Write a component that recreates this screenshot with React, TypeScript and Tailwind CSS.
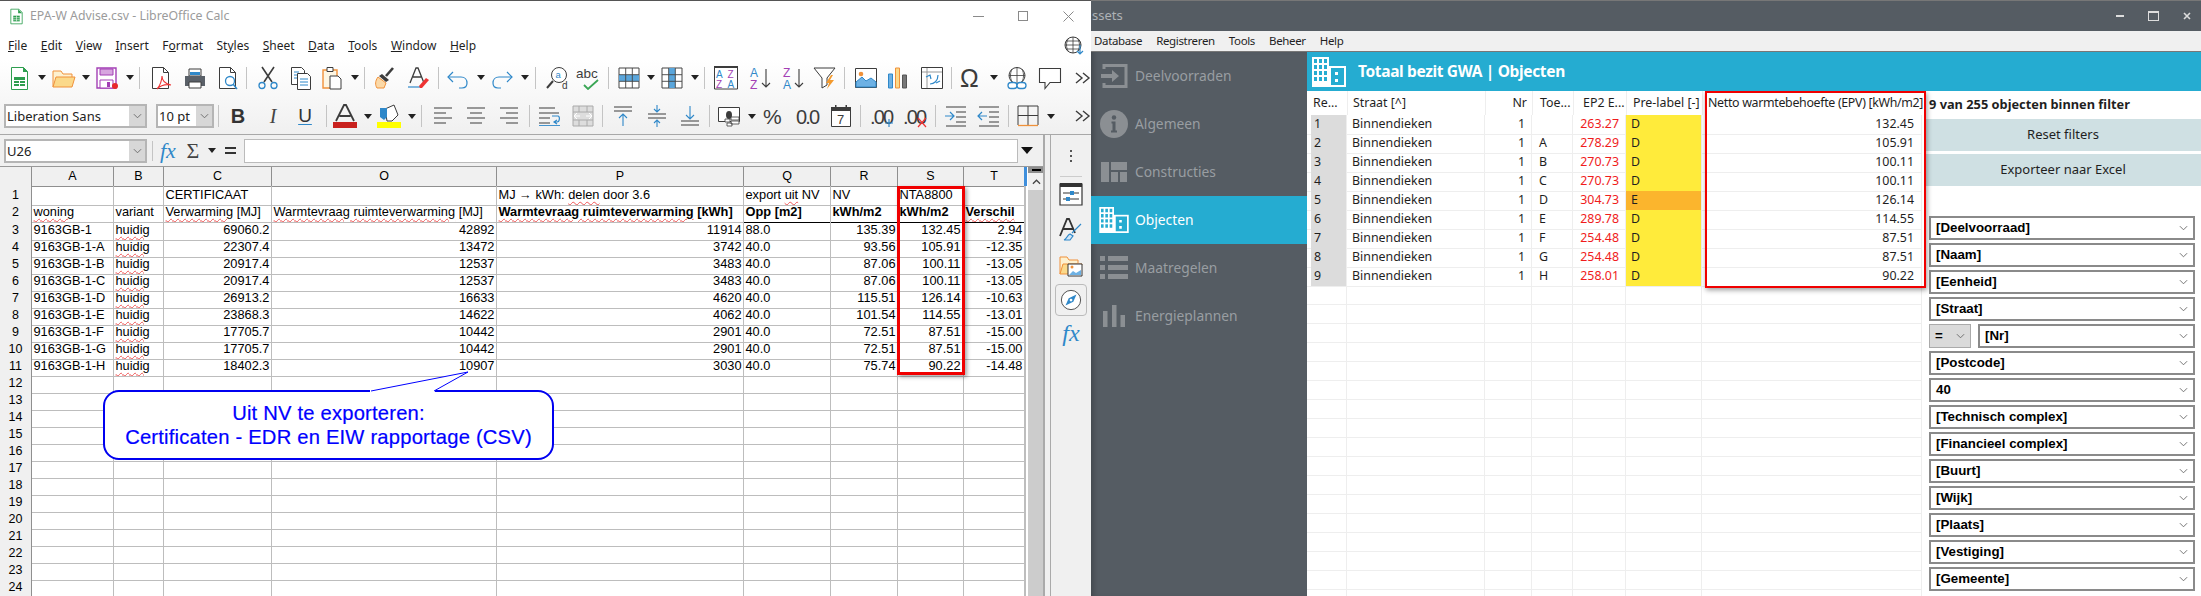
import React from "react";

type P = { c?: string };
const S = ({ c = "", children, w = 24 }: { c?: string; children: React.ReactNode; w?: number }) => (
  <svg viewBox={`0 0 ${w} 24`} width={w} height={24} fill="none" className={`flex-none ${c}`}>{children}</svg>
);
const DK = "#3c3c3c";
const BL = "#2f88c9";
const OR = "#f0913a";
const PU = "#a33fb5";

const DD = ({ c }: P) => (<svg viewBox="0 0 8 5" width={8} height={5} className={`flex-none ${c}`}><path d="M0 0h8L4 5z" fill="#222" /></svg>);
const Sep = ({ c }: P) => <div className={`w-px h-[22px] bg-[#c4c4c4] flex-none ${c}`} />;
const Chev2 = ({ c }: P) => (<S c={c}><path d="M6 7l6 5-6 5M13 7l6 5-6 5" stroke={DK} strokeWidth="1.4" /></S>);

const New = ({ c }: P) => (<S c={c}><path d="M4.5 1.5h12l4 4v18h-16z" fill="#fff" stroke="#2e9e4f" /><path d="M16 1l5 5h-5z" fill="#2e9e4f" /><path d="M7 11h11v9H7z" fill="#2e9e4f" /><path d="M7 14.5h11M7 17.5h11M12.5 14v6" stroke="#fff" /></S>);
const Open = ({ c }: P) => (<S c={c}><path d="M1 21V5h8l2 3h9v3" fill="#fdf1d0" stroke={OR} /><path d="M1 21l3-10h19l-3 10z" fill="#fbd98a" stroke={OR} /></S>);
const Save = ({ c }: P) => (<S c={c}><path d="M2 2h19v20H2z" fill="#fff" stroke={PU} strokeWidth="1.4" /><path d="M5 3h13v6H5z" fill="#d7a5df" stroke={PU} /><path d="M5 14h13v8H5z" fill="#fff" stroke={PU} /><path d="M12 16h3v5h-3z" fill={PU} /><circle cx="20" cy="20" r="3" fill="#e8282b" /></S>);
const Pdf = ({ c }: P) => (<S c={c}><path d="M3.5 1.5h11l5 5v16h-16z" fill="#fff" stroke={DK} /><path d="M14.5 1.5v5h5" stroke={DK} /><path d="M8 23c3-3 5-9 5-13 0 5 4 8 9 9-5-1-10 0-14 4z" stroke="#e33" strokeWidth="1.1" fill="#fff" /></S>);
const Print = ({ c }: P) => (<S c={c}><path d="M6 3h12v7H6z" fill="#fff" stroke={DK} /><path d="M7 6h10v3H7z" fill={BL} /><path d="M2 10h20v10H2z" fill="#5a6068" /><path d="M6 16h12v6H6z" fill="#fff" stroke={DK} /></S>);
const Preview = ({ c }: P) => (<S c={c}><path d="M3.5 1.5h11l5 5v16h-16z" fill="#fff" stroke={DK} /><path d="M14.5 1.5v5h5" stroke={DK} /><circle cx="14" cy="15" r="4.5" fill="#fff" stroke={BL} strokeWidth="1.3" /><path d="M17 18l4 5" stroke={BL} strokeWidth="1.5" /></S>);
const Cut = ({ c }: P) => (<S c={c}><path d="M6 1l10 15M18 1L8 16" stroke={DK} strokeWidth="1.6" /><circle cx="6" cy="19.5" r="3" stroke={BL} strokeWidth="1.3" /><circle cx="18" cy="19.5" r="3" stroke={BL} strokeWidth="1.3" /></S>);
const Copy = ({ c }: P) => (<S c={c}><path d="M2.5 1.5h10l3 3v14h-13z" fill="#fff" stroke={DK} /><path d="M8.5 7.5h10l3 3v13h-13z" fill="#fff" stroke={DK} /><path d="M11 13h8M11 16h8M11 19h8M5 6h5M5 9h3M5 12h3" stroke={BL} /></S>);
const Paste = ({ c }: P) => (<S c={c}><path d="M3 4h14v18H3z" fill="#fdf6e3" stroke={OR} strokeWidth="1.4" /><path d="M7 1.5h6v4H7z" fill="#fff" stroke={DK} /><path d="M10 10h8l3 3v10H10z" fill="#fff" stroke={DK} /></S>);
const Clone = ({ c }: P) => (<S c={c}><path d="M20 2l-7 8" stroke={DK} strokeWidth="2.6" /><path d="M9 8l7 6-3 2-7-6z" fill={DK} /><path d="M5 11l8 6-2 5H4c-2-3-2-7 1-11z" fill="#fbd9a8" stroke={OR} /></S>);
const Clear = ({ c }: P) => (<S c={c}><path d="M4 17L10 2h2l6 15M7 11h8" stroke={DK} strokeWidth="1.3" /><path d="M2 21h12" stroke={BL} strokeWidth="1.2" /><path d="M13 20l7-8 3 2-7 8h-2z" fill="#e33" /></S>);
const Undo = ({ c }: P) => (<S c={c}><path d="M7 6L2 11l5 5" stroke={BL} strokeWidth="1.2" /><path d="M2 11h13c4 0 6 3 6 6s-2 5-5 5h-3" stroke={BL} strokeWidth="1.2" /></S>);
const Redo = ({ c }: P) => (<S c={c}><path d="M17 6l5 5-5 5" stroke={BL} strokeWidth="1.2" /><path d="M22 11H9c-4 0-6 3-6 6s2 5 5 5h3" stroke={BL} strokeWidth="1.2" /></S>);
const Find = ({ c }: P) => (<S c={c}><circle cx="13" cy="9" r="7.5" fill="#fff" stroke={DK} /><path d="M7 15L1 22" stroke={DK} strokeWidth="2" /><text x="9.5" y="12" fontSize="9.5" fill={BL} fontFamily="Liberation Sans, sans-serif">a</text><text x="16" y="23" fontSize="10" fill={DK} fontFamily="Liberation Sans, sans-serif">d</text></S>);
const Spell = ({ c }: P) => (<S c={c}><text x="0" y="12" fontSize="13.5" fill={DK} fontFamily="Liberation Sans, sans-serif">abc</text><path d="M8 19l4 4 10-9" stroke="#3aa655" strokeWidth="1.8" /></S>);
const Grid = ({ col, c }: { col?: boolean } & P) => (<S c={c}><path d="M2 2h20v20H2z" fill="#fff" stroke="#444" /><path d={col ? "M8.7 2h6.6v20H8.7z" : "M2 8.7h20v6.6H2z"} fill="#5aa6dc" /><path d="M8.7 2v20M15.3 2v20M2 8.7h20M2 15.3h20" stroke="#444" strokeWidth=".9" /></S>);
const Sort = ({ c }: P) => (<S c={c} ><path d="M.5 1h23v22H.5z" fill="#fff" stroke={DK} /><path d="M0 1h24" stroke={DK} strokeWidth="2" /><g fontSize="10" fontFamily="Liberation Sans, sans-serif"><text x="2" y="12" fill={BL}>A</text><text x="2" y="21.5" fill={PU}>Z</text><text x="13.5" y="12" fill={PU}>Z</text><text x="13.5" y="21.5" fill={BL}>A</text></g></S>);
const AZ = ({ c, z }: { z?: boolean } & P) => (<S c={c}><g fontSize="12" fontFamily="Liberation Sans, sans-serif"><text x="2" y="11" fill={z ? PU : BL}>{z ? "Z" : "A"}</text><text x="2" y="22.5" fill={z ? BL : PU}>{z ? "A" : "Z"}</text></g><path d="M18 3v18M14 17l4 4 4-4" stroke={DK} strokeWidth="1.1" /></S>);
const Filter = ({ c }: P) => (<S c={c}><path d="M1 2h21l-8 10v7l-5 3V12z" fill="#fff" stroke={DK} /><path d="M18 9l-5 8h3l-2 6 7-9h-4l3-5z" fill="#f39a2e" /></S>);
const Img = ({ c }: P) => (<S c={c}><path d="M1.5 2.5h21v19h-21z" fill="#fff" stroke={DK} /><circle cx="7" cy="8" r="2.3" fill={OR} /><path d="M2 21v-5l6-5 4 4 5-3 5 4v5z" fill="#6db1e4" stroke={BL} /></S>);
const Chart = ({ c }: P) => (<S c={c}><path d="M2.5 8h4v14h-4z" fill="#6db1e4" stroke={BL} /><path d="M9.5 2h4v20h-4z" fill="#fbd98a" stroke={OR} /><path d="M16.5 9h4v13h-4z" fill="#777" stroke="#555" /></S>);
const Pivot = ({ c }: P) => (<S c={c}><path d="M1.5 1.5h21v21h-21z" fill="#fff" stroke={DK} /><path d="M2 6h20M7 2v20" stroke="#999" /><path d="M10 18c4 0 8-3 8-9M6 11l4-2 1 4M16 17l4-2" stroke={BL} strokeWidth="1.2" /></S>);
const Omega = ({ c }: P) => (<S c={c}><text x="1" y="21" fontSize="25" fill={DK} fontFamily="Liberation Sans, sans-serif">Ω</text></S>);
const Link = ({ c }: P) => (<S c={c}><circle cx="12" cy="9.5" r="8" fill="#fff" stroke={DK} /><path d="M4 9.5h16M12 1.5v16M7 3c-2 4-2 9 0 13M17 3c2 4 2 9 0 13" stroke={DK} strokeWidth=".8" /><rect x="3" y="16.5" width="9" height="6" rx="3" fill="#fff" stroke={BL} strokeWidth="1.3" /><rect x="12" y="16.5" width="9" height="6" rx="3" fill="#fff" stroke={BL} strokeWidth="1.3" /></S>);
const Comment = ({ c }: P) => (<S c={c}><path d="M1.5 2.5h21v14H12l-5 6v-6H1.5z" fill="#fff" stroke={DK} strokeWidth="1.1" /></S>);
const Globe = ({ c }: P) => (<S c={c}><circle cx="11" cy="11" r="8" stroke={DK} fill="#fff" /><path d="M3 11h16M11 3v16M6 5c-2 4-2 8 0 12M16 5c2 4 2 8 0 12M4 7h14M4 15h14" stroke={DK} strokeWidth=".8" /><path d="M18 11v9M15 17l3 3 3-3" stroke={BL} strokeWidth="1.2" /></S>);

const Lines = ({ c, a }: { a: "l" | "m" | "r" } & P) => {
  const d = a === "l" ? "M3 4h18M3 9h12M3 14h18M3 19h12" : a === "m" ? "M3 4h18M6 9h12M3 14h18M6 19h12" : "M3 4h18M9 9h12M3 14h18M9 19h12";
  return <S c={c}><path d={d} stroke={DK} strokeWidth="1.1" /></S>;
};
const FontA = ({ c }: P) => (<S c={c}><path d="M3 17L11 1h2l8 16M6.500 12h11" stroke={DK} strokeWidth="1.8" /><path d="M0 18h24v6H0z" fill="#c9211e" /></S>);
const Hl = ({ c }: P) => (<S c={c}><path d="M8 5l9-4 4 10-6 6H10z" fill="#fff" stroke={DK} /><path d="M3 4h7v9l-3 3-4-3z" fill={BL} /><path d="M0 18h24v6H0z" fill="#ffff00" /></S>);
const Wrap = ({ c }: P) => (<S c={c}><path d="M1 4h16M1 9h20M1 14h11M1 19h11" stroke={DK} strokeWidth="1.1" /><path d="M14 12h6c2 0 2 6-1 6h-2M19 16l-3 2 3 2" stroke={BL} strokeWidth="1.2" /><path d="M1 21.500h21" stroke={BL} strokeWidth=".9" /></S>);
const Merge = ({ c }: P) => (<S c={c}><path d="M2 2h20v20H2z" fill="#ddd" stroke="#aaa" /><path d="M2 8h20M2 16h20M8 2v6M16 2v6M8 16v6M16 16v6" stroke="#aaa" /><path d="M3 12h6M6 9l-3 3 3 3M21 12h-6M18 9l3 3-3 3" stroke="#fff" /></S>);
const VAlign = ({ c, t }: { t: "t" | "m" | "b" } & P) => (<S c={c}>
  {t === "t" && <><path d="M3 3h18M3 7h18" stroke={DK} /><path d="M12 22V10M8 14l4-4 4 4" stroke={BL} strokeWidth="1.1" /></>}
  {t === "m" && <><path d="M3 10h18M3 14h18" stroke={DK} /><path d="M12 1v7M9 5l3 3 3-3M12 23v-7M9 19l3-3 3 3" stroke={BL} strokeWidth="1.1" /></>}
  {t === "b" && <><path d="M12 2v13M8 11l4 4 4-4" stroke={BL} strokeWidth="1.1" /><path d="M3 17h18M3 21h18" stroke={DK} /></>}
</S>);
const Cur = ({ c }: P) => (<S c={c}><path d="M1.500 3.500h21v14h-21z" fill="#fff" stroke={DK} /><ellipse cx="12" cy="11" rx="3" ry="4" fill={DK} /><path d="M8 15h5v3H8zM14 13h8v3h-8zM14 17h8v3h-8zM10 19h5v3h-5z" fill="#fff" stroke={DK} strokeWidth=".8" /></S>);
const Pct = ({ c }: P) => (<S c={c}><text x="0" y="20" fontSize="21" fill={DK} fontFamily="Liberation Sans, sans-serif">%</text></S>);
const Num = ({ c }: P) => (<S c={c}><text x="0" y="20" fontSize="20" fill={DK} fontFamily="Liberation Sans, sans-serif" textLength="24">0.0</text></S>);
const DateI = ({ c }: P) => (<S c={c}><path d="M2.500 4.500h19v18h-19z" fill="#fff" stroke={DK} /><path d="M2 3h20v4H2zM6 1h1.500v3H6zM16.500 1H18v3h-1.500z" fill={DK} /><text x="8" y="20" fontSize="13" fill={DK} fontFamily="Liberation Sans, sans-serif">7</text></S>);
const Dec = ({ c, del }: { del?: boolean } & P) => (<S c={c}><text x="0" y="20" fontSize="20" fill={DK} fontFamily="Liberation Sans, sans-serif" textLength="24">.00</text>{del ? <path d="M15 14l8 9M23 14l-8 9" stroke="#e33" strokeWidth="1.2" /> : <path d="M15 19h8M19 15v8" stroke={BL} strokeWidth="1.2" />}</S>);
const Indent = ({ c, out }: { out?: boolean } & P) => (<S c={c}><path d="M2 3h20M12 8h10M12 13h10M12 18h10M2 22h20" stroke={DK} strokeWidth="1.1" /><path d={out ? "M10 12H1M5 8l-4 4 4 4" : "M1 12h9M6 8l4 4-4 4"} stroke={BL} strokeWidth="1.2" /></S>);
const Borders = ({ c }: P) => (<S c={c}><path d="M2 21V2h20v19M12 2v19M2 11.500h20" stroke={DK} /><path d="M2 21.500h20" stroke={OR} strokeWidth="1.3" /></S>);

const fontSheet = "font-[Liberation_Sans,Arial,sans-serif]";
const ui = "font-[Noto_Sans,Open_Sans,sans-serif]";
const serif = "font-[Liberation_Serif,serif]";

const Mnemonic = ({ t, u }: { t: string; u: number }) => (
  <span>{t.slice(0, u)}<span className="underline">{t[u]}</span>{t.slice(u + 1)}</span>
);

const Combo = ({ text, c }: { text: string; c: string }) => (
  <div className={`h-[24px] flex-none border-2 border-[#b5b5b5] bg-white flex ${c}`}>
    <div className={`flex-1 pl-[1px] text-[13px] leading-[20px] text-[#222] ${ui}`}>{text}</div>
    <div className="w-[16px] bg-[#d7d7d7] flex items-center justify-center">
      <svg viewBox="0 0 10 6" width={9} height={6}><path d="M1 1l4 4 4-4" stroke="#666" fill="none" /></svg>
    </div>
  </div>
);

const Wavy = ({ children }: { children: React.ReactNode }) => (
  <span className="underline decoration-wavy decoration-[#ee5555] decoration-1 [text-underline-offset:2px]">{children}</span>
);

const colHeads = ["A", "B", "C", "O", "P", "Q", "R", "S", "T"];
const rows: string[][] = [
  ["9163GB-1", "69060.2", "42892", "11914", "88.0", "135.39", "132.45", "2.94"],
  ["9163GB-1-A", "22307.4", "13472", "3742", "40.0", "93.56", "105.91", "-12.35"],
  ["9163GB-1-B", "20917.4", "12537", "3483", "40.0", "87.06", "100.11", "-13.05"],
  ["9163GB-1-C", "20917.4", "12537", "3483", "40.0", "87.06", "100.11", "-13.05"],
  ["9163GB-1-D", "26913.2", "16633", "4620", "40.0", "115.51", "126.14", "-10.63"],
  ["9163GB-1-E", "23868.3", "14622", "4062", "40.0", "101.54", "114.55", "-13.01"],
  ["9163GB-1-F", "17705.7", "10442", "2901", "40.0", "72.51", "87.51", "-15.00"],
  ["9163GB-1-G", "17705.7", "10442", "2901", "40.0", "72.51", "87.51", "-15.00"],
  ["9163GB-1-H", "18402.3", "10907", "3030", "40.0", "75.74", "90.22", "-14.48"],
];
const gridCols = "grid grid-cols-[32px_82px_50px_108px_225px_247px_87px_67px_66px_61px]";
const cell = "border-r border-b border-[#bdbdbd] h-full px-[1.5px] whitespace-nowrap overflow-hidden leading-[18px]";
const hdr = "border-r border-b border-[#8f8f8f] bg-[#f0f0f0] flex items-center justify-center text-[12.5px]";
const R = "text-right";

const Sheet = () => (
  <div className={`relative flex-1 overflow-hidden flex bg-white text-[12.8px] text-black ${fontSheet}`}>
    <div className="w-[1025px] flex-none">
      <div className={`${gridCols} h-[19px]`}>
        <div className={hdr} />
        {colHeads.map((h) => <div key={h} className={hdr}>{h}</div>)}
      </div>
      <div className={`${gridCols} h-[17px]`}>
        <div className={hdr}>1</div>
        <div className={cell} /><div className={cell} />
        <div className={cell}>CERTIFICAAT</div>
        <div className={cell} />
        <div className={cell}>MJ → kWh: <Wavy>delen</Wavy> door 3.6</div>
        <div className={cell}>export <Wavy>uit</Wavy> NV</div>
        <div className={cell}>NV</div>
        <div className={cell}>NTA8800</div>
        <div className={cell} />
      </div>
      <div className={`${gridCols} h-[18px]`}>
        <div className={hdr}>2</div>
        <div className={cell}><Wavy>woning</Wavy></div>
        <div className={cell}>variant</div>
        <div className={cell}><Wavy>Verwarming</Wavy> [MJ]</div>
        <div className={cell}><Wavy>Warmtevraag ruimteverwarming</Wavy> [MJ]</div>
        <div className={`${cell} font-bold`}><Wavy>Warmtevraag ruimteverwarming</Wavy> [kWh]</div>
        <div className={`${cell} font-bold !border-b-black`}>Opp [m2]</div>
        <div className={`${cell} font-bold !border-b-black`}>kWh/m2</div>
        <div className={`${cell} font-bold !border-b-black`}>kWh/m2</div>
        <div className={`${cell} font-bold !border-b-black`}><Wavy>Verschil</Wavy></div>
      </div>
      {rows.map((r, i) => (
        <div key={i} className={`${gridCols} h-[17px]`}>
          <div className={hdr}>{i + 3}</div>
          <div className={cell}>{r[0]}</div>
          <div className={cell}><Wavy>huidig</Wavy></div>
          <div className={`${cell} ${R}`}>{r[1]}</div>
          <div className={`${cell} ${R}`}>{r[2]}</div>
          <div className={`${cell} ${R}`}>{r[3]}</div>
          <div className={cell}>{r[4]}</div>
          <div className={`${cell} ${R}`}>{r[5]}</div>
          <div className={`${cell} ${R} pr-[2.5px]`}>{r[6]}</div>
          <div className={`${cell} ${R}`}>{r[7]}</div>
        </div>
      ))}
      {Array.from({ length: 13 }, (_, i) => (
        <div key={i} className={`${gridCols} h-[17px]`}>
          <div className={hdr}>{i + 12}</div>
          {colHeads.map((h) => <div key={h} className={cell} />)}
        </div>
      ))}
    </div>
    <div className="w-[3px] flex-none bg-white border-l border-[#bdbdbd]">
      <div className="h-[19px] bg-[#3f8fdc] -ml-[2px] w-[3px]" />
    </div>
    <div className="w-[16px] flex-none flex flex-col bg-[#ccc]">
      <div className="h-[6px] bg-[#8e8e8e] flex items-center justify-center"><div className="w-[9px] h-[2px] bg-black" /></div>
      <div className="h-[17px] bg-[#f0f0f0] flex items-center justify-center">
        <svg viewBox="0 0 10 6" width={9} height={6}><path d="M1 5l4-4 4 4" stroke="#444" strokeWidth="1.4" fill="none" /></svg>
      </div>
    </div>
    {/* Overlays */}
    <div className="absolute left-[897px] top-[19px] w-[68px] h-[189px] border-[3px] border-[#f00000] shadow-[2px_2px_4px_rgba(0,0,0,.35)]" />
    <svg viewBox="0 0 100 21" width={100} height={21} className="absolute left-[370px] top-[204px] z-10">
      <path d="M1 20L98 1 64 20" fill="#fff" stroke="#0000ff" />
    </svg>
    <div className="absolute left-[103px] top-[223px] w-[451px] h-[70px] rounded-[16px] border-2 border-[#0000f0] bg-white flex flex-col items-center justify-center text-[#0000ff] text-[20.200px] leading-[24px] tracking-[.2px] [-webkit-text-stroke:.2px_#0000ff]">
      <div>Uit NV te exporteren:</div>
      <div>Certificaten - EDR en EIW rapportage (CSV)</div>
    </div>
    <div className="absolute left-[370px] top-[223px] w-[65px] h-[3px] bg-white" />
  </div>
);

const Deck = () => (
  <div className="w-[47px] flex-none bg-[#f0f0f0] border-l border-[#aaa] flex">
    <div className="w-[6px] border-r border-[#aaa]" />
    <div className="flex-1 flex flex-col items-center">
      <div className="h-[30px] flex flex-col justify-center gap-[3px] mt-[6px]">
        <div className="w-[2px] h-[2px] bg-[#555]" /><div className="w-[2px] h-[2px] bg-[#555]" /><div className="w-[2px] h-[2px] bg-[#555]" />
      </div>
      <div className="w-[22px] h-px bg-[#ccc] mt-[5px]" />
      <svg viewBox="0 0 24 24" width={24} height={24} className="mt-[5px]"><path d="M1 2h22v21H1z" fill="#fff" stroke="#333" strokeWidth="1.2" /><path d="M1 1h22v4H1z" fill="#333" /><path d="M4 11h16M4 17h16" stroke="#333" /><path d="M11 9h4v4h-4zM7 15h4v4H7z" fill={BL} /></svg>
      <svg viewBox="0 0 24 24" width={24} height={24} className="mt-[11px]"><path d="M1 19L8 2h2l6 14M4 12h10" stroke="#333" strokeWidth="1.8" fill="none" /><path d="M22 7L13 16M11 17l3 2-3 4H5c3-1 3-5 6-6z" stroke={BL} fill="#cfe5f7" strokeWidth="1.2" /></svg>
      <svg viewBox="0 0 24 24" width={24} height={24} className="mt-[12px]"><path d="M1 21V4h7l2 3h9v3" fill="#fdf1d0" stroke={OR} /><path d="M1 21l3-10h19l-3 10z" fill="#fbd98a" stroke={OR} /><path d="M9 11h14v12H9z" fill="#fff" stroke="#333" /><path d="M10 22l4-4 3 2 5-3v5z" fill="#6db1e4" /><circle cx="13" cy="14" r="1.500" fill={OR} /></svg>
      <div className="mt-[7px] w-[32px] h-[32px] border border-[#bbb] rounded-[4px] flex items-center justify-center">
        <svg viewBox="0 0 24 24" width={22} height={22}><circle cx="12" cy="12" r="10.500" fill="#fff" stroke="#444" /><path d="M18 6l-3.500 8L6 18l3.500-8z" fill={BL} /><circle cx="12" cy="12" r="1.500" fill="#fff" /></svg>
      </div>
      <div className={`mt-[3px] italic text-[24px] leading-[28px] text-[#2f88c9] ${serif}`}>fx</div>
    </div>
  </div>
);

const LeftWindow = () => (
  <div className="w-[1091px] flex-none flex flex-col bg-white">
    <div className={`h-[31px] flex-none flex items-center border-t border-[#555] ${ui}`}>
      <svg viewBox="0 0 16 20" width={13} height={17} className="ml-[10px]"><path d="M1 1h10l4 4v14H1z" fill="#fff" stroke="#2e9e4f" /><path d="M10 1l5 5h-5z" fill="#2e9e4f" /><path d="M4 9h8v7H4z" fill="#2e9e4f" /><path d="M4 11.500h8M4 14h8M8 9v7" stroke="#fff" strokeWidth=".7" /></svg>
      <div className="ml-[7px] text-[12.300px] text-[#9b9b9b] whitespace-nowrap">EPA-W Advise.csv - LibreOffice Calc</div>
      <div className="ml-auto flex items-center mr-[17px]">
        <div className="w-[11px] h-px bg-[#8a8a8a]" />
        <div className="w-[10px] h-[10px] border border-[#8a8a8a] ml-[34px]" />
        <svg viewBox="0 0 11 11" width={11} height={11} className="ml-[35px]"><path d="M.5.5l10 10M10.500.5l-10 10" stroke="#8a8a8a" /></svg>
      </div>
    </div>
    <div className={`h-[29px] flex-none flex items-center text-[12px] text-[#1f1f1f] pl-[8px] gap-[13.5px] ${ui}`}>
      <Mnemonic t="File" u={0} /><Mnemonic t="Edit" u={0} /><Mnemonic t="View" u={0} /><Mnemonic t="Insert" u={0} /><Mnemonic t="Format" u={1} /><Mnemonic t="Styles" u={2} /><Mnemonic t="Sheet" u={0} /><Mnemonic t="Data" u={0} /><Mnemonic t="Tools" u={0} /><Mnemonic t="Window" u={0} /><Mnemonic t="Help" u={0} />
      <Globe c="ml-auto mr-[5px]" />
    </div>
    <div className="h-[75px] flex-none flex flex-col bg-linear-to-b from-white to-[#f0f0f0] border-b border-[#a8a8a8]">
      <div className="h-[35px] flex items-center">
        <New c="ml-[7px]" /><DD c="ml-[7px]" /><Open c="ml-[6px]" /><DD c="ml-[6px]" /><Save c="ml-[5px]" /><DD c="ml-[7px]" /><Sep c="ml-[5px]" />
        <Pdf c="ml-[9px]" /><Print c="ml-[10px]" /><Preview c="ml-[9px]" /><Sep c="ml-[6px]" />
        <Cut c="ml-[9px]" /><Copy c="ml-[9px]" /><Paste c="ml-[7px]" /><DD c="ml-[7px]" /><Sep c="ml-[5px]" />
        <Clone c="ml-[8px]" /><Clear c="ml-[9px]" /><Sep c="ml-[8px]" />
        <Undo c="ml-[7px]" /><DD c="ml-[7px]" /><Redo c="ml-[5px]" /><DD c="ml-[7px]" /><Sep c="ml-[6px]" />
        <Find c="ml-[10px]" /><Spell c="ml-[6px]" /><Sep c="ml-[8px]" />
        <Grid c="ml-[8px]" /><DD c="ml-[6px]" /><Grid col c="ml-[5px]" /><DD c="ml-[7px]" /><Sep c="ml-[5px]" />
        <Sort c="ml-[9px]" /><AZ c="ml-[10px]" /><AZ z c="ml-[9px]" /><Filter c="ml-[8px]" /><Sep c="ml-[7px]" />
        <Img c="ml-[9px]" /><Chart c="ml-[8px]" /><Pivot c="ml-[10px]" /><Sep c="ml-[7px]" />
        <Omega c="ml-[7px]" /><DD c="ml-[7px]" /><Link c="ml-[7px]" /><Comment c="ml-[9px]" /><Chev2 c="ml-[8px]" />
      </div>
      <div className="h-[39px] flex items-center pt-[3px]">
        <Combo text="Liberation Sans" c="w-[143px] ml-[4px]" />
        <Combo text="10 pt" c="w-[58px] ml-[9px]" />
        <Sep c="ml-[4px]" />
        <div className={`flex-none w-[24px] ml-[7px] text-center font-bold text-[20px] leading-[24px] text-[#333] ${fontSheet}`}>B</div>
        <div className={`flex-none w-[24px] ml-[11px] text-center italic text-[20px] leading-[24px] text-[#444] ${serif}`}>I</div>
        <div className={`flex-none w-[24px] ml-[8px] text-center text-[19px] leading-[22px] text-[#333] underline decoration-[#2f88c9] decoration-1 underline-offset-2 ${fontSheet}`}>U</div>
        <Sep c="ml-[9px]" />
        <FontA c="ml-[6px]" /><DD c="ml-[7px]" /><Hl c="ml-[5px]" /><DD c="ml-[7px]" /><Sep c="ml-[5px]" />
        <Lines a="l" c="ml-[9px]" /><Lines a="m" c="ml-[9px]" /><Lines a="r" c="ml-[9px]" /><Sep c="ml-[8px]" />
        <Wrap c="ml-[8px]" /><Merge c="ml-[9px]" /><Sep c="ml-[7px]" />
        <VAlign t="t" c="ml-[8px]" /><VAlign t="m" c="ml-[10px]" /><VAlign t="b" c="ml-[9px]" /><Sep c="ml-[7px]" />
        <Cur c="ml-[7px]" /><DD c="ml-[7px]" /><Pct c="ml-[7px]" /><Num c="ml-[9px]" /><DateI c="ml-[9px]" /><Sep c="ml-[7px]" />
        <Dec c="ml-[9px]" /><Dec del c="ml-[9px]" /><Sep c="ml-[8px]" />
        <Indent c="ml-[8px]" /><Indent out c="ml-[9px]" /><Sep c="ml-[7px]" />
        <Borders c="ml-[7px]" /><DD c="ml-[7px]" /><Chev2 c="ml-[15px]" />
      </div>
    </div>
    <div className="flex-1 flex min-h-0">
      <div className="w-[1044px] flex-none flex flex-col border-r border-[#aaa]">
        <div className="h-[32px] flex-none bg-[#f0f0f0] flex items-center border-b border-[#999]">
          <Combo text="U26" c="w-[143px] ml-[4px]" />
          <div className="w-px h-[20px] bg-[#c4c4c4] ml-[5px] flex-none" />
          <div className={`ml-[7px] w-[20px] italic text-[22px] leading-[24px] text-[#2f88c9] ${serif}`}>fx</div>
          <div className={`ml-[3px] w-[20px] text-center text-[22px] leading-[24px] text-[#444] ${serif}`}>Σ</div>
          <DD c="ml-[5px]" />
          <div className="ml-[9px] w-[11px] flex flex-col gap-[3px] flex-none"><div className="h-[2px] bg-[#333]" /><div className="h-[2px] bg-[#333]" /></div>
          <div className="ml-[8px] w-[774px] h-[24px] flex-none bg-white border border-[#bbb]" />
          <svg viewBox="0 0 12 7" width={12} height={7} className="ml-[3px] flex-none"><path d="M0 0h12L6 7z" fill="#111" /></svg>
        </div>
        <Sheet />
      </div>
      <Deck />
    </div>
  </div>
);

const TB = "#25acd1";
const Building = ({ w, h, win }: { w: number; h: number; win: string }) => (
  <svg viewBox="0 0 34 30" width={w} height={h} className="flex-none">
    <path d="M0 0h17v30H0z" fill="#fff" />
    <path d="M17 9h17v21H17z" fill="#fff" />
    <path d="M2 2h3v4H2zM7 2h3v4H7zM12 2h3v4h-3zM2 8h3v4H2zM7 8h3v4H7zM12 8h3v4h-3zM2 14h3v4H2zM7 14h3v4H7zM12 14h3v4h-3zM2 20h3v4H2zM7 20h3v4H7zM12 20h3v4h-3zM19 11h13v17H19z" fill={win} />
    <path d="M23 15h3v3h-3zM23 22h3v3h-3z" fill="#fff" />
  </svg>
);
const G = "#8b8f93";
const nav: { t: string; icon: React.ReactNode; on?: boolean }[] = [
  { t: "Deelvoorraden", icon: <svg viewBox="0 0 28 28" width={28} height={28}><path d="M4 7V3.500h22v21H4V21" stroke={G} strokeWidth="3" fill="none" /><path d="M1 12h11V8l7 6-7 6v-4H1z" fill={G} /></svg> },
  { t: "Algemeen", icon: <svg viewBox="0 0 28 28" width={28} height={28}><circle cx="14" cy="14" r="14" fill={G} /><circle cx="14" cy="7.500" r="2.200" fill="#555c63" /><path d="M11.500 11.500h4v9h1.500v2h-6v-2h1.500v-7h-1z" fill="#555c63" /></svg> },
  { t: "Constructies", icon: <svg viewBox="0 0 26 20" width={26} height={20}><path d="M0 0h8v20H0zM10 0h16v8H10zM10 10h7v10h-7zM19 10h7v10h-7z" fill={G} /></svg> },
  { t: "Objecten", on: true, icon: <Building w={30} h={26} win={TB} /> },
  { t: "Maatregelen", icon: <svg viewBox="0 0 28 26" width={28} height={26}><path d="M0 1h5v5H0zM0 10h5v5H0zM0 19h5v5H0zM8 1h20v5H8zM8 10h20v5H8zM8 19h20v5H8z" fill={G} /></svg> },
  { t: "Energieplannen", icon: <svg viewBox="0 0 22 22" width={22} height={22}><path d="M0 6h4.500v16H0zM9 0h4.500v22H9zM17.500 10H22v12h-4.500z" fill={G} /></svg> },
];

const dataR: [string, string, string, string, boolean, string][] = [
  ["1", "1", "", "263.27", false, "132.45"],
  ["2", "1", "A", "278.29", false, "105.91"],
  ["3", "1", "B", "270.73", false, "100.11"],
  ["4", "1", "C", "270.73", false, "100.11"],
  ["5", "1", "D", "304.73", true, "126.14"],
  ["6", "1", "E", "289.78", false, "114.55"],
  ["7", "1", "F", "254.48", false, "87.51"],
  ["8", "1", "G", "254.48", false, "87.51"],
  ["9", "1", "H", "258.01", false, "90.22"],
];
const rc = "grid grid-cols-[40px_138px_47px_41px_53px_76px_220px] h-[19px]";
const filters = ["[Deelvoorraad]", "[Naam]", "[Eenheid]", "[Straat]", "", "[Postcode]", "40", "[Technisch complex]", "[Financieel complex]", "[Buurt]", "[Wijk]", "[Plaats]", "[Vestiging]", "[Gemeente]"];

const Chevron = () => (
  <svg viewBox="0 0 10 6" width={9} height={6} className="flex-none mr-[5px]"><path d="M1 1l4 4 4-4" stroke="#666" fill="none" /></svg>
);
const Sel = ({ t, c = "w-[266px]", }: { t: string; c?: string }) => (
  <div className={`h-[24px] flex-none border-2 border-[#8a8a8a] bg-white flex items-center justify-between pl-[5px] text-[13.300px] font-bold text-black ${fontSheet} ${c}`}>
    <span>{t}</span><Chevron />
  </div>
);

const RightWindow = () => (
  <div className={`flex-1 flex flex-col min-w-0 shadow-[inset_6px_0_6px_-4px_rgba(0,0,0,.25)] ${ui}`}>
    <div className="h-[31px] flex-none bg-[#555c63] border-t border-[#777] flex items-center pl-[1px] text-[13px] text-[#aeb2b6]">
      ssets
      <div className="ml-auto flex items-center mr-[10px] text-white">
        <div className="w-[8px] h-[2px] bg-[#ddd]" />
        <div className="w-[11px] h-[10px] border border-[#ddd] border-t-[2px] ml-[24px]" />
        <svg viewBox="0 0 8 8" width={8} height={8} className="ml-[24px]"><path d="M1 1l6 6M7 1L1 7" stroke="#ddd" strokeWidth="1.6" /></svg>
      </div>
    </div>
    <div className="h-[21px] flex-none bg-[#f0f0f0] border-b border-[#777] flex items-center pl-[3px] gap-[14px] text-[11.500px] tracking-[-.35px] text-[#1f1f1f]">
      <span>Database</span><span>Registreren</span><span>Tools</span><span>Beheer</span><span>Help</span>
    </div>
    <div className="flex-1 flex min-h-0">
      <div className="w-[216px] flex-none bg-[#555c63] shadow-[inset_6px_0_6px_-4px_rgba(0,0,0,.25)]">
        {nav.map((n) => (
          <div key={n.t} className={`h-[48px] flex items-center ${n.on ? "bg-[#25acd1] text-white" : "text-[#999ea2]"}`}>
            <div className="w-[44px] flex-none flex items-center justify-center pl-[2px]">{n.icon}</div>
            <span className="text-[13.800px]">{n.t}</span>
          </div>
        ))}
      </div>
      <div className="flex-1 flex flex-col min-w-0 bg-white">
        <div className="h-[39px] flex-none bg-[#25acd1] flex items-center pl-[5px]">
          <Building w={34} h={30} win={TB} />
          <span className="ml-[12px] text-white font-bold text-[15.500px] tracking-[-.35px] whitespace-nowrap">Totaal bezit GWA | Objecten</span>
        </div>
        <div className="flex-1 flex min-h-0 overflow-hidden">
          <div className="relative w-[615px] flex-none text-[12.400px] text-[#1f1f1f]">
            <div className={`${rc} !h-[24px] items-center whitespace-nowrap`}>
              <span className="pl-[6px]">Re...</span>
              <span className="pl-[5px] h-full flex items-center border-l border-[#eee]">Straat [^]</span>
              <span className="pr-[5px] text-right h-full flex items-center justify-end border-l border-[#eee]">Nr</span>
              <span className="pl-[7px] h-full flex items-center border-l border-[#eee]">Toe...</span>
              <span className="pl-[9px] h-full flex items-center border-l border-[#eee]">EP2 E...</span>
              <span className="pl-[6px] h-full flex items-center border-l border-[#eee]">Pre-label [-]</span>
              <span className="pl-[5px] h-full flex items-center border-l border-[#eee] tracking-[-.32px]">Netto warmtebehoefte (EPV) [kWh/m2]</span>
            </div>
            {Array.from({ length: 26 }, (_, i) => {
              const d = dataR[i];
              const cellR = "border-r border-b border-[#eee] flex items-center";
              return (
                <div key={i} className={rc}>
                  <div className={`${cellR} pl-[4px]`}>{d && <span className="w-full h-full bg-[#dcdcdc] pl-[3px] flex items-center">{d[0]}</span>}</div>
                  <div className={`${cellR} pl-[5px]`}>{d && "Binnendieken"}</div>
                  <div className={`${cellR} justify-end pr-[6px]`}>{d && d[1]}</div>
                  <div className={`${cellR} pl-[7px]`}>{d && d[2]}</div>
                  <div className={`${cellR} justify-end pr-[6px] text-[#f01c1c]`}>{d && d[3]}</div>
                  <div className={`${cellR} ${d ? (d[4] ? "bg-[#fbb52d]" : "bg-[#ffeb3b]") : ""} pl-[5px]`}>{d && (d[4] ? "E" : "D")}</div>
                  <div className={`${cellR} justify-end pr-[7px]`}>{d && d[5]}</div>
                </div>
              );
            })}
            <div className="absolute left-[398px] top-0 w-[221px] h-[197px] border-[2.500px] border-[#f00000] shadow-[1px_2px_5px_rgba(0,0,0,.4)] pointer-events-none" />
          </div>
          <div className="flex-1 min-w-0 flex flex-col">
            <div className="h-[28px] flex-none flex items-center pl-[7px] font-bold text-[12.800px] text-[#1f1f1f] whitespace-nowrap">9 van 255 objecten binnen filter</div>
            <div className="h-[32px] flex-none ml-[3px] bg-[#cfe0e3] flex items-center justify-center text-[13px] text-[#1f1f1f]">Reset filters</div>
            <div className="h-[32px] flex-none ml-[3px] mt-[3px] bg-[#cfe0e3] flex items-center justify-center text-[13px] text-[#1f1f1f]">Exporteer naar Excel</div>
            <div className="mt-[30px] pl-[7px] flex flex-col gap-[3px]">
              {filters.map((f, i) => f ? <Sel key={i} t={f} /> : (
                <div key={i} className="flex gap-[7px] h-[24px] flex-none">
                  <div className={`w-[42px] h-full bg-[#dadada] border border-[#aaa] flex items-center justify-between pl-[5px] font-bold text-[13.300px] text-black ${fontSheet}`}>=<Chevron /></div>
                  <Sel t="[Nr]" c="w-[217px]" />
                </div>
              ))}
            </div>
          </div>
        </div>
      </div>
    </div>
  </div>
);

export default function App() {
  return (
    <div className="w-[2201px] h-[596px] overflow-hidden flex">
      <LeftWindow />
      <RightWindow />
    </div>
  );
}
